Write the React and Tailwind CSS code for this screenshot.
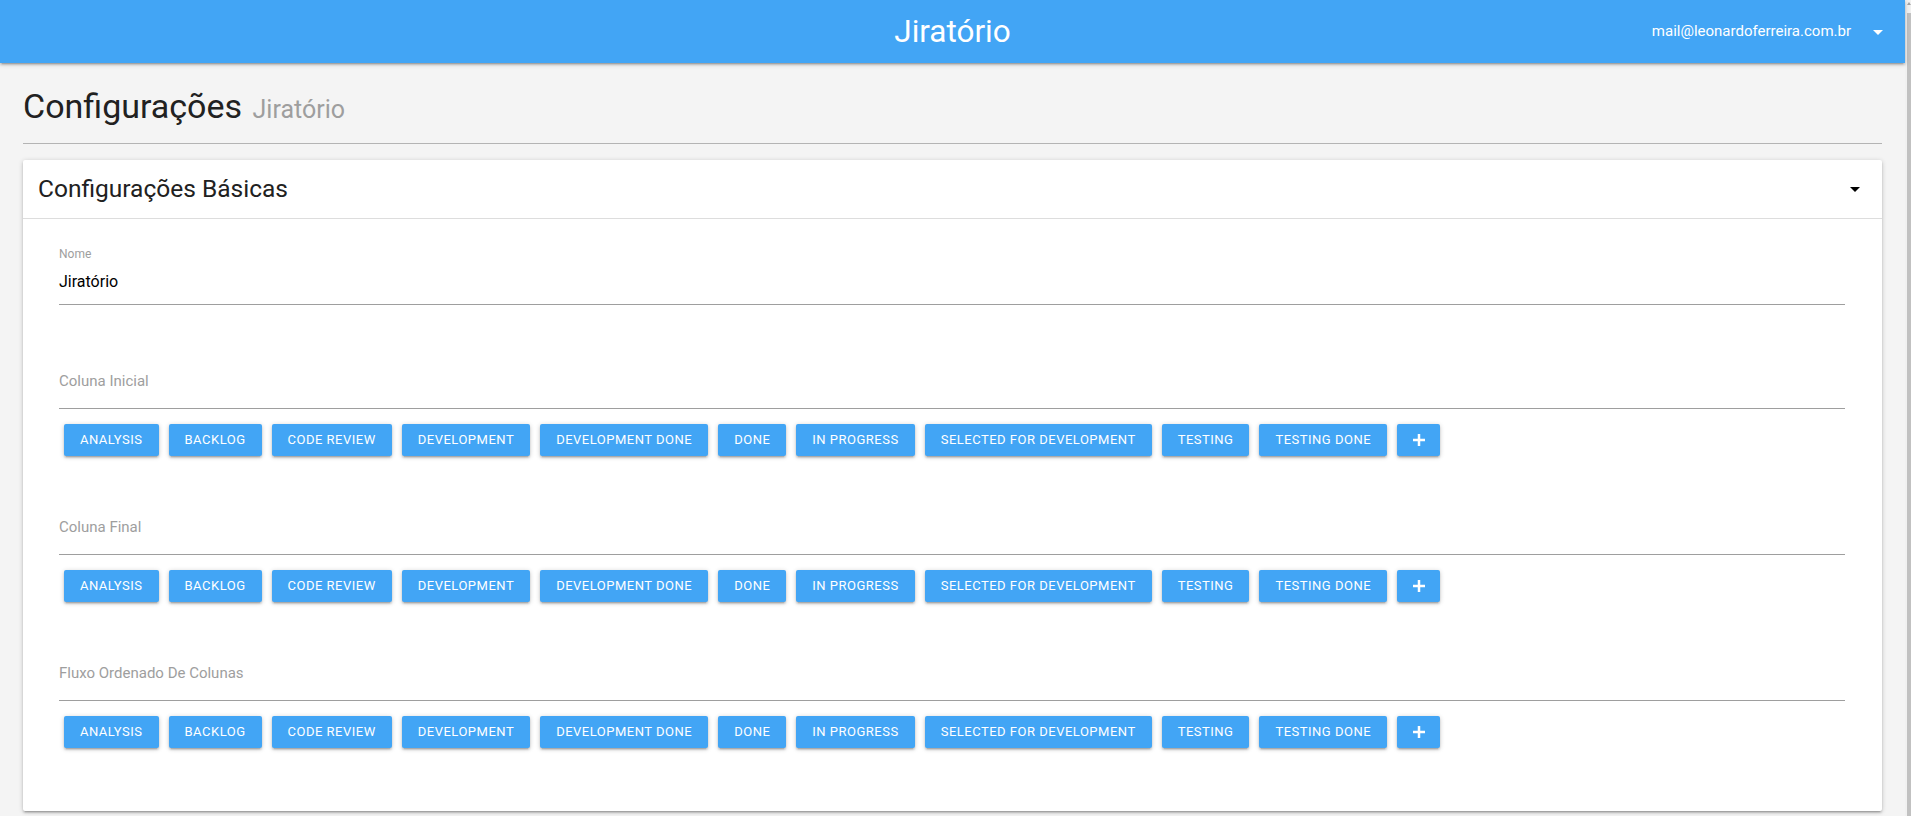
import React from 'react';

const COLUMNS = [
  'ANALYSIS',
  'BACKLOG',
  'CODE REVIEW',
  'DEVELOPMENT',
  'DEVELOPMENT DONE',
  'DONE',
  'IN PROGRESS',
  'SELECTED FOR DEVELOPMENT',
  'TESTING',
  'TESTING DONE',
];

const zDepth = 'shadow-[0_2px_2px_0_rgba(0,0,0,0.14),0_3px_1px_-2px_rgba(0,0,0,0.12),0_1px_5px_0_rgba(0,0,0,0.2)]';

const ArrowDropDown = ({ className }) => (
  <svg viewBox="0 0 24 24" width="24" height="24" className={className}>
    <path d="M7 10l5 5 5-5z" fill="currentColor" />
  </svg>
);

const ColumnButtons = () => (
  <div className="mt-[10px] flex flex-wrap">
    {COLUMNS.map(col => (
      <button
        key={col}
        className={`m-[5px] h-[32px] px-[16px] rounded-[2px] bg-[#42a5f5] text-white text-[13px] leading-[32px] tracking-[0.5px] ${zDepth}`}
      >
        {col}
      </button>
    ))}
    {/* add column */}
    <button className={`m-[5px] h-[32px] w-[43px] rounded-[2px] bg-[#42a5f5] text-white flex items-center justify-center ${zDepth}`}>
      <svg viewBox="0 0 12 12" width="12" height="12">
        <path d="M4.75 0h2.5v12h-2.5zM0 4.75h12v2.5H0z" fill="currentColor" />
      </svg>
    </button>
  </div>
);

const ColumnField = ({ label, first }) => (
  <div>
    <div className={`${first ? 'mt-[66px]' : 'mt-[56px]'} text-[15px] leading-[20px] text-[#9e9e9e] pb-[17px] border-b border-[#9e9e9e]`}>
      {label}
    </div>
    <ColumnButtons />
  </div>
);

export default function App() {
  return (
    <div className="h-screen overflow-hidden flex font-['Roboto',sans-serif]">
      <div className="flex-1 min-w-0 bg-[#f4f4f4]">
        {/* Navbar */}
        <nav className={`h-[63px] bg-[#42a5f5] text-white grid grid-cols-[1fr_auto_1fr] items-center relative z-10 ${zDepth}`}>
          <div />
          <div className="text-[31.5px] leading-[63px]">Jiratório</div>
          <div className="flex justify-end items-center pr-[15px]">
            <span className="text-[15px]">mail@leonardoferreira.com.br</span>
            <ArrowDropDown className="ml-[15px]" />
          </div>
        </nav>

        <main className="px-[23px]">
          {/* Page title */}
          <h4 className="mt-[24px] text-[34px] leading-[38px] text-[#212121]">
            Configurações <small className="ml-[2px] text-[25px] text-[#9e9e9e]">Jiratório</small>
          </h4>
          <div className="mt-[14px] h-px bg-[#b4b4b4]" />

          {/* Card */}
          <section className={`mt-[16px] bg-white rounded-[2px] ${zDepth}`}>
            <div className="h-[58px] px-[15px] flex items-center justify-between border-b border-[#dddddd] box-content">
              <span className="text-[24.5px] leading-[28px] text-[#212121]">Configurações Básicas</span>
              <ArrowDropDown className="text-black" />
            </div>

            <div className="pl-[36px] pr-[37px] pb-[58px]">
              {/* Nome */}
              <div className="pt-[29px]">
                <div className="text-[12px] leading-[12px] text-[#9e9e9e]">Nome</div>
                <div className="mt-[10px] text-[16px] leading-[24px] text-black pb-[10px] border-b border-[#9e9e9e]">
                  Jiratório
                </div>
              </div>

              <ColumnField label="Coluna Inicial" first />
              <ColumnField label="Coluna Final" />
              <ColumnField label="Fluxo Ordenado De Colunas" />
            </div>
          </section>
        </main>
      </div>

      {/* scrollbar */}
      <div className="w-[6px] bg-[#f1f1f1] flex flex-col">
        <div className="h-[13px] flex justify-end pt-[2px]">
          <svg viewBox="0 0 4 3" width="4" height="3">
            <path d="M2 0L4 3H0z" fill="#a3a3a3" />
          </svg>
        </div>
        <div className="flex-1 ml-[2px] bg-[#c1c1c1]" />
      </div>
    </div>
  );
}
